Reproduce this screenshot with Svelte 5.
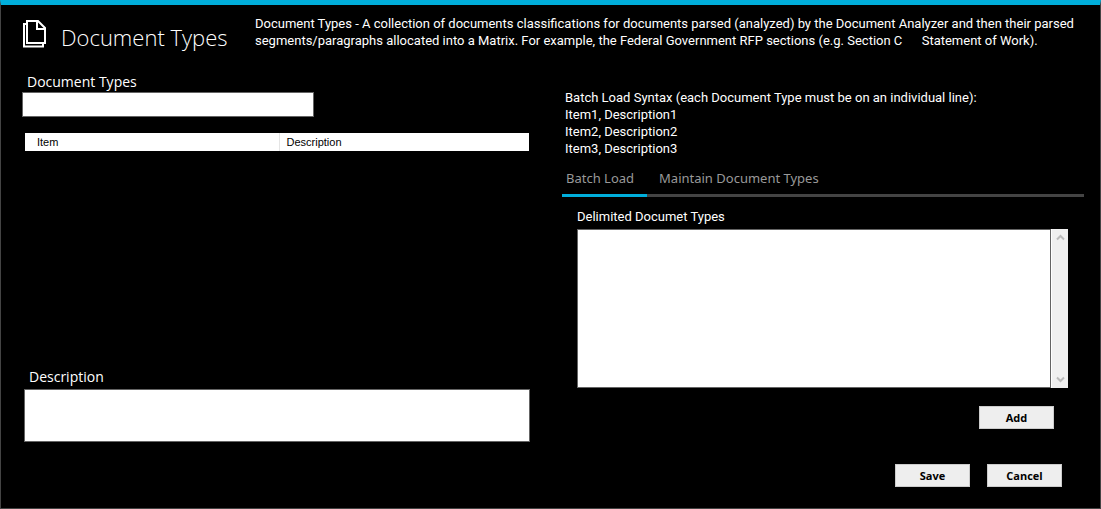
<script>
  let filter = $state('');
  let description = $state('');
  let delimited = $state('');
  let active = $state(0);
  const tabs = ['Batch Load', 'Maintain Document Types'];
</script>

<main class="window">
  <header>
    <svg class="logo" width="24" height="28" viewBox="0 0 24 28" fill="none" stroke="#fff" aria-hidden="true">
      <path d="M5 4H2V26.5H21V24" stroke-width="2" />
      <path d="M5 1H16L23 8V23H5Z" stroke-width="2" />
      <path d="M15 1V9H23" stroke-width="2" />
    </svg>
    <h1>Document Types</h1>
    <p class="intro">
      <span>Document Types - A collection of documents classifications for documents parsed (analyzed) by the Document Analyzer and then their parsed</span>
      <span>segments/paragraphs allocated into a Matrix. For example, the Federal Government RFP sections (e.g. Section C &nbsp;&nbsp;&nbsp;&nbsp; Statement of Work).</span>
    </p>
  </header>

  <div class="body">
    <section class="left">
      <label class="big" for="filter">Document Types</label>
      <input id="filter" class="filter" type="text" bind:value={filter} />
      <table>
        <thead>
          <tr><th scope="col" class="item">Item</th><th scope="col">Description</th></tr>
        </thead>
      </table>
      <label class="big desc-label" for="description">Description</label>
      <textarea id="description" class="description" bind:value={description}></textarea>
    </section>

    <section class="right">
      <p class="syntax">
        Batch Load Syntax (each Document Type must be on an individual line):<br />
        Item1, Description1<br />
        Item2, Description2<br />
        Item3, Description3
      </p>
      <div class="tabs" role="tablist">
        {#each tabs as tab, i}
          <button class="tab" class:active={active === i} role="tab" aria-selected={active === i} onclick={() => (active = i)}>{tab}</button>
        {/each}
      </div>
      <div class="panel">
        <label for="delimited">Delimited Documet Types</label>
        <div class="editor">
          <textarea id="delimited" bind:value={delimited}></textarea>
          <div class="scroll" aria-hidden="true">
            <svg width="9" height="7" viewBox="0 0 9 7"><path d="M1 5.5L4.5 2L8 5.5" /></svg>
            <svg width="9" height="7" viewBox="0 0 9 7"><path d="M1 1.5L4.5 5L8 1.5" /></svg>
          </div>
        </div>
        <div class="add-row"><button class="push">Add</button></div>
      </div>
      <div class="actions">
        <button class="push">Save</button>
        <button class="push">Cancel</button>
      </div>
    </section>
  </div>
</main>

<style>
  :global(body) {
    background: #000;
  }
  .window,
  .window * {
    box-sizing: border-box;
  }
  .window {
    display: flex;
    flex-direction: column;
    min-height: 100vh;
    border: 1px solid #444;
    border-top: 5px solid #00aedb;
    padding: 0 16px 21px 21px;
    background: #000;
    color: #fff;
    font: 13px/17px Roboto, sans-serif;
  }
  header {
    display: flex;
    align-items: flex-start;
    height: 66px;
    padding-top: 10px;
  }
  .logo {
    flex: none;
    margin-top: 5px;
  }
  h1 {
    flex: none;
    width: 194px;
    margin: 5px 0 0 15px;
    font: 300 22px/34px 'Open Sans', sans-serif;
    white-space: nowrap;
  }
  p {
    margin: 0;
  }
  .intro {
    white-space: nowrap;
  }
  .intro span {
    display: block;
  }
  .body {
    flex: 1;
    display: grid;
    grid-template-columns: 508fr 522fr;
    gap: 32px;
  }
  .left,
  .right {
    display: flex;
    flex-direction: column;
    min-width: 0;
  }
  .big {
    padding: 1px 0 0 5px;
    font: 14px/20px 'Open Sans', sans-serif;
  }
  input,
  textarea {
    display: block;
    margin: 0;
    border: 1px solid #646464;
    border-radius: 0;
    padding: 3px 5px;
    background: #fff;
    color: #000;
    font: inherit;
    resize: none;
    outline: none;
  }
  .filter {
    width: 292px;
    height: 25px;
  }
  table {
    margin: 16px 1px 0 3px;
    border-collapse: collapse;
    table-layout: fixed;
    background: #fff;
    color: #000;
    font: 11px/18px 'Liberation Sans', sans-serif;
  }
  th {
    padding: 0 0 0 7px;
    font-weight: 400;
    text-align: left;
  }
  .item {
    width: 254px;
    padding-left: 12px;
    border-right: 1px solid #e5e5e5;
  }
  .desc-label {
    margin-top: auto;
    padding-left: 7px;
  }
  .description {
    height: 53px;
    margin: 2px 0 45px 2px;
  }
  .syntax {
    margin-top: 18px;
    padding-left: 3px;
  }
  .tabs {
    display: flex;
    margin-top: 9px;
    background: linear-gradient(#444, #444) bottom / 100% 3px no-repeat;
  }
  .tab {
    border: 0;
    border-bottom: 3px solid transparent;
    padding: 0 13px 4px 12px;
    background: none;
    color: #999;
    font: 13px/24px 'Noto Sans', sans-serif;
  }
  .tab:first-child {
    padding-left: 4px;
  }
  .tab.active {
    border-color: #00aedb;
  }
  .panel {
    display: flex;
    flex: 1;
    flex-direction: column;
    padding: 11px 16px 0 15px;
  }
  .editor {
    display: flex;
    flex: 1;
    margin-top: 4px;
  }
  .editor textarea {
    flex: 1;
    min-width: 0;
    overflow: hidden;
  }
  .scroll {
    display: flex;
    flex-direction: column;
    align-items: center;
    justify-content: space-between;
    width: 17px;
    padding: 5px 0;
    border-left: 1px solid #fff;
    background: #f0f0f0;
  }
  .scroll path {
    fill: none;
    stroke: #bbb;
    stroke-width: 2;
  }
  .add-row {
    display: flex;
    justify-content: flex-end;
    padding: 18px 14px 0 0;
  }
  .actions {
    display: flex;
    justify-content: flex-end;
    gap: 17px;
    padding: 35px 22px 0 0;
  }
  .push {
    width: 75px;
    height: 23px;
    border: 1px solid #ccc;
    padding: 0;
    background: #eee;
    color: #000;
    font: 700 11px/17px 'Open Sans', sans-serif;
  }
</style>
